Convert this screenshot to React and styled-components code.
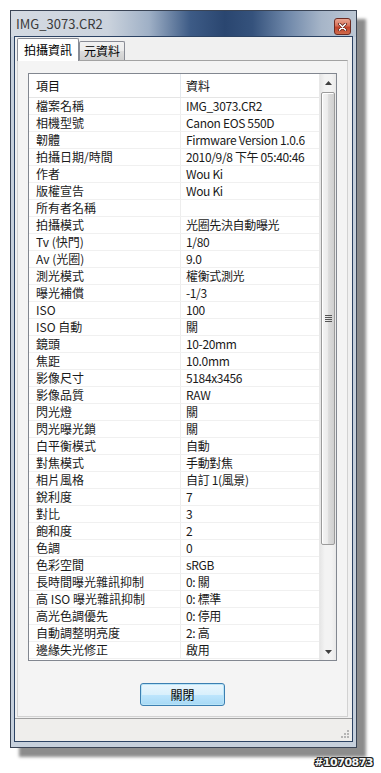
import React from "react";
import styled, { createGlobalStyle } from "styled-components";

const rows = [
	["檔案名稱", "IMG_3073.CR2"],
	["相機型號", "Canon EOS 550D"],
	["韌體", "Firmware Version 1.0.6"],
	["拍攝日期/時間", "2010/9/8 下午 05:40:46"],
	["作者", "Wou Ki"],
	["版權宣告", "Wou Ki"],
	["所有者名稱", ""],
	["拍攝模式", "光圈先決自動曝光"],
	["Tv (快門)", "1/80"],
	["Av (光圈)", "9.0"],
	["測光模式", "權衡式測光"],
	["曝光補償", "-1/3"],
	["ISO", "100"],
	["ISO 自動", "關"],
	["鏡頭", "10-20mm"],
	["焦距", "10.0mm"],
	["影像尺寸", "5184x3456"],
	["影像品質", "RAW"],
	["閃光燈", "關"],
	["閃光曝光鎖", "關"],
	["白平衡模式", "自動"],
	["對焦模式", "手動對焦"],
	["相片風格", "自訂 1(風景)"],
	["銳利度", "7"],
	["對比", "3"],
	["飽和度", "2"],
	["色調", "0"],
	["色彩空間", "sRGB"],
	["長時間曝光雜訊抑制", "0: 關"],
	["高 ISO 曝光雜訊抑制", "0: 標準"],
	["高光色調優先", "0: 停用"],
	["自動調整明亮度", "2: 高"],
	["邊緣失光修正", "啟用"],
];

const GlobalStyle = createGlobalStyle`
	html, body {
		margin: 0;
		padding: 0;
		background: #ffffff;
	}
	body {
		font-family: "Noto Sans CJK TC", "Liberation Sans", sans-serif;
	}
`;

const Page = styled.div`
	width: 381px;
	height: 773px;
	box-sizing: border-box;
	padding: 10px 0 0 10px;
	display: flex;
	flex-direction: column;
`;

const Window = styled.div`
	width: 347px;
	height: 738px;
	box-sizing: border-box;
	border: 1px solid #3a4455;
	padding: 0 3px 5px 3px;
	display: flex;
	flex-direction: column;
	background:
		linear-gradient(
				90deg,
				#d4dae2 0%,
				#cbd3dd 28%,
				#9fb0c6 40%,
				#3d5b86 52%,
				#2a4670 62%,
				#35527c 70%,
				#6e87a9 80%,
				#a6b5c8 90%,
				#bcc7d4 100%
			)
			top / 100% 26px no-repeat,
		#c6d0dc;
	box-shadow: 9px 9px 3px rgba(0, 0, 0, 0.45);
`;

const TitleBar = styled.div`
	height: 25px;
	display: flex;
	align-items: flex-end;
	justify-content: space-between;
	padding: 0 2px 1px 2px;
	box-sizing: border-box;
`;

const TitleText = styled.span`
	font-size: 13px;
	line-height: 22px;
	color: #3a3a3a;
	align-self: center;
	padding-top: 2px;
`;

const CloseButton = styled.div`
	width: 17px;
	height: 17px;
	box-sizing: border-box;
	border: 1px solid #6d2b22;
	border-radius: 3px;
	background: linear-gradient(180deg, #eaa692 0%, #d76f58 45%, #c2432c 55%, #cf6a4a 100%);
	display: flex;
	align-items: center;
	justify-content: center;
`;

const Client = styled.div`
	flex: 1;
	border: 1px solid #2c4364;
	background: #f0f0f0;
	display: flex;
	flex-direction: column;
`;

const TabStrip = styled.div`
	height: 23px;
	display: flex;
	align-items: flex-end;
	padding-left: 2px;
	position: relative;
	z-index: 1;
`;

const Tab = styled.div`
	box-sizing: border-box;
	height: ${(p) => (p.$active ? 23 : 19)}px;
	margin-bottom: ${(p) => (p.$active ? -1 : 0)}px;
	padding: 0 ${(p) => (p.$active ? 6 : 4)}px;
	border: 1px solid #898c95;
	border-bottom: none;
	border-radius: 2px 2px 0 0;
	background: ${(p) => (p.$active ? "#ffffff" : "linear-gradient(180deg, #f2f2f2 0%, #ebebeb 50%, #dddddd 51%, #cfcfcf 100%)")};
	font-size: 12px;
	line-height: ${(p) => (p.$active ? 22 : 17)}px;
	color: #000;
	white-space: nowrap;
`;

const Panel = styled.div`
	flex: 1;
	margin: 0 4px 1px 2px;
	border: 1px solid #d2d2d2;
	border-top-color: #a3a3a3;
	background: #f4f4f4;
	padding: 12px 10px 10px 10px;
	display: flex;
	flex-direction: column;
`;

const ListView = styled.div`
	height: 588px;
	box-sizing: border-box;
	border: 1px solid #828790;
	background: #ffffff;
	display: flex;
`;

const Table = styled.div`
	flex: 1;
	display: flex;
	flex-direction: column;
`;

const HeaderRow = styled.div`
	height: 24px;
	box-sizing: border-box;
	border-bottom: 1px solid #e5e5e5;
	display: grid;
	grid-template-columns: 152px 1fr;
	font-size: 12px;
	line-height: 23px;
	color: #111;
`;

const HeaderCell = styled.div`
	padding-left: ${(p) => (p.$first ? 7 : 5)}px;
	border-right: ${(p) => (p.$first ? "1px solid #e3e8ee" : "none")};
	white-space: nowrap;
`;

const Row = styled.div`
	height: 17px;
	box-sizing: border-box;
	border-bottom: 1px solid #f0f0f0;
	display: grid;
	grid-template-columns: 152px 1fr;
	font-size: 12px;
	line-height: 16px;
	color: #1a1a1a;
`;

const Cell = styled.div`
	padding-left: ${(p) => (p.$first ? 7 : 5)}px;
	border-right: ${(p) => (p.$first ? "1px solid #ededed" : "none")};
	letter-spacing: ${(p) => (p.$first ? "0" : "-0.35px")};
	white-space: nowrap;
	overflow: hidden;
`;

const ScrollBar = styled.div`
	width: 17px;
	display: flex;
	flex-direction: column;
	background: linear-gradient(90deg, #e6e6e6 0%, #f3f3f3 30%, #f3f3f3 70%, #e9e9e9 100%);
	border-left: 1px solid #e8e8e8;
	box-sizing: border-box;
`;

const ArrowButton = styled.div`
	height: 17px;
	display: flex;
	align-items: center;
	justify-content: center;
	margin-top: ${(p) => (p.$down ? "auto" : "0")};
`;

const Thumb = styled.div`
	height: 453px;
	margin: 1px 1px 0 1px;
	box-sizing: border-box;
	border: 1px solid #9b9b9b;
	border-radius: 2px;
	background: linear-gradient(90deg, #f4f4f4 0%, #ececec 45%, #dcdcdc 55%, #d0d0d0 100%);
	box-shadow: inset 1px 1px 0 #ffffff;
	display: flex;
	align-items: center;
	justify-content: center;
`;

const ButtonRow = styled.div`
	margin-top: 22px;
	display: flex;
	justify-content: center;
`;

const DialogButton = styled.button`
	width: 85px;
	height: 23px;
	box-sizing: border-box;
	border: 1px solid #3c7fb1;
	border-radius: 3px;
	background: linear-gradient(180deg, #eaf6fd 0%, #d9f0fc 50%, #bee6fd 51%, #a7d9f5 100%);
	box-shadow: inset 0 0 0 1px #b9e4f7;
	font-family: inherit;
	font-size: 12px;
	line-height: 20px;
	color: #000;
	padding: 0;
`;

const StatusBar = styled.div`
	height: 23px;
	box-sizing: border-box;
	border-top: 1px solid #a0a0a0;
	background: #efeeec;
	display: flex;
	justify-content: flex-end;
	align-items: flex-end;
	padding: 0 3px 3px 0;
`;

const Footer = styled.div`
	margin-top: 9px;
	display: flex;
	justify-content: flex-end;
	padding-right: 8px;
`;

const Watermark = styled.span`
	font-family: "DejaVu Sans", sans-serif;
	font-weight: bold;
	font-size: 11px;
	letter-spacing: -0.5px;
	line-height: 12px;
	color: #f6f6f6;
	text-shadow: 1px 0 #222, -1px 0 #222, 0 1px #222, 0 -1px #222, 1px 1px #222, -1px -1px #222,
		1px -1px #222, -1px 1px #222;
`;

const CloseIcon = () => (
	<svg width="9" height="8" viewBox="0 0 9 8">
		<path d="M1.5 1 L7.5 7 M7.5 1 L1.5 7" stroke="#5a1d14" strokeWidth="3" strokeLinecap="round" />
		<path d="M1.5 1 L7.5 7 M7.5 1 L1.5 7" stroke="#ffffff" strokeWidth="1.6" strokeLinecap="round" />
	</svg>
);

const Arrow = ({ down }) => (
	<svg width="7" height="4" viewBox="0 0 7 4">
		<path d={down ? "M0 0 H7 L3.5 4 Z" : "M3.5 0 L7 4 H0 Z"} fill="#404040" />
	</svg>
);

const Grip = () => (
	<svg width="7" height="8" viewBox="0 0 7 8">
		{[0, 2, 4, 6].map((y) => (
			<rect key={y} x="0" y={y} width="7" height="1" fill="#555" />
		))}
	</svg>
);

const SizeGrip = () => (
	<svg width="8" height="8" viewBox="0 0 8 8">
		{[
			[6, 0],
			[3, 3],
			[6, 3],
			[0, 6],
			[3, 6],
			[6, 6],
		].map(([x, y]) => (
			<rect key={`${x}-${y}`} x={x} y={y} width="2" height="2" fill="#b5b5b5" />
		))}
	</svg>
);

export default function App() {
	return (
		<Page>
			<GlobalStyle />
			<Window>
				<TitleBar>
					<TitleText>IMG_3073.CR2</TitleText>
					<CloseButton>
						<CloseIcon />
					</CloseButton>
				</TitleBar>
				<Client>
					<TabStrip>
						<Tab $active>拍攝資訊</Tab>
						<Tab>元資料</Tab>
					</TabStrip>
					<Panel>
						<ListView>
							<Table>
								<HeaderRow>
									<HeaderCell $first>項目</HeaderCell>
									<HeaderCell>資料</HeaderCell>
								</HeaderRow>
								{rows.map(([label, value]) => (
									<Row key={label}>
										<Cell $first>{label}</Cell>
										<Cell>{value}</Cell>
									</Row>
								))}
							</Table>
							<ScrollBar>
								<ArrowButton>
									<Arrow />
								</ArrowButton>
								<Thumb>
									<Grip />
								</Thumb>
								<ArrowButton $down>
									<Arrow down />
								</ArrowButton>
							</ScrollBar>
						</ListView>
						<ButtonRow>
							<DialogButton>關閉</DialogButton>
						</ButtonRow>
					</Panel>
					<StatusBar>
						<SizeGrip />
					</StatusBar>
				</Client>
			</Window>
			<Footer>
				<Watermark>#1070873</Watermark>
			</Footer>
		</Page>
	);
}
